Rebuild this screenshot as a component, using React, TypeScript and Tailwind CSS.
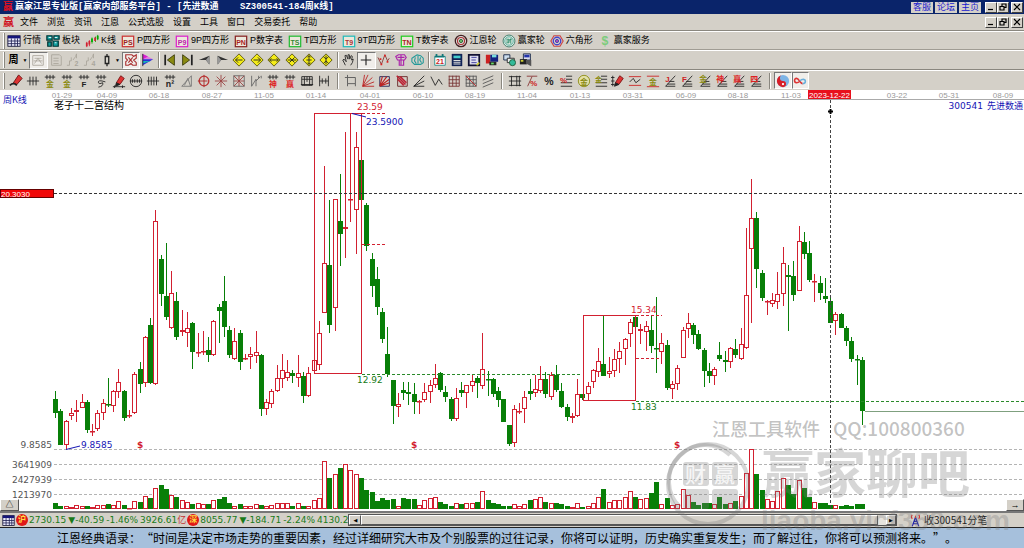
import type { ReactNode } from "react";

// [high, bodyTop, bodyBottom, low, up ? 1 : 0, volume height]
const candles: number[][] = [
  [391, 399, 413, 418, 0, 6], [409, 411, 445, 445, 0, 3], [420, 421, 445, 449, 1, 3], [408, 413, 416, 420, 1, 2],
  [400, 410, 412, 422, 1, 4], [394, 402, 408, 408, 1, 3], [400, 402, 430, 433, 0, 3], [424, 431, 431, 436, 1, 2],
  [410, 413, 429, 431, 1, 4], [399, 403, 413, 420, 1, 4], [378, 404, 405, 407, 0, 5], [390, 391, 406, 412, 1, 4],
  [369, 382, 392, 398, 1, 8], [390, 391, 418, 421, 0, 4], [410, 415, 416, 418, 1, 1], [372, 374, 413, 414, 1, 8],
  [362, 369, 384, 393, 0, 7], [336, 337, 383, 387, 1, 13], [318, 325, 383, 384, 0, 11], [210, 221, 384, 385, 1, 21],
  [255, 259, 294, 306, 0, 24], [243, 296, 317, 320, 0, 20], [271, 293, 328, 329, 1, 14], [292, 301, 337, 340, 0, 12],
  [310, 330, 332, 336, 1, 9], [312, 328, 333, 347, 1, 7], [322, 323, 352, 369, 0, 5], [333, 352, 353, 357, 1, 6],
  [331, 351, 352, 355, 1, 5], [337, 350, 355, 362, 0, 5], [320, 321, 355, 356, 1, 9], [304, 307, 311, 343, 0, 10],
  [276, 301, 327, 337, 0, 12], [326, 330, 355, 358, 0, 6], [328, 341, 359, 360, 1, 3], [330, 333, 362, 370, 0, 5],
  [354, 358, 359, 360, 1, 3], [347, 354, 357, 369, 1, 3], [331, 352, 356, 363, 1, 5], [354, 355, 409, 416, 0, 4],
  [399, 402, 409, 415, 1, 3], [389, 391, 404, 408, 1, 4], [365, 378, 391, 392, 1, 6], [354, 370, 379, 388, 1, 6],
  [360, 372, 378, 381, 1, 6], [370, 373, 376, 383, 0, 3], [355, 373, 378, 387, 1, 6], [372, 376, 396, 403, 0, 3],
  [367, 373, 396, 397, 1, 3], [358, 360, 371, 373, 1, 9], [321, 333, 365, 370, 1, 11], [166, 263, 313, 313, 1, 48],
  [200, 265, 325, 333, 0, 31], [199, 199, 308, 331, 1, 35], [174, 221, 234, 266, 0, 41], [132, 227, 229, 258, 1, 45],
  [113, 199, 200, 222, 1, 39], [132, 147, 210, 254, 1, 35], [115, 160, 200, 250, 0, 31], [203, 205, 246, 251, 0, 19],
  [253, 259, 286, 297, 0, 17], [267, 279, 307, 315, 0, 8], [308, 312, 339, 343, 0, 11], [327, 354, 374, 377, 0, 9],
  [380, 380, 406, 424, 0, 10], [393, 404, 407, 417, 1, 3], [382, 390, 393, 400, 0, 11], [382, 392, 394, 405, 0, 10],
  [383, 394, 402, 414, 0, 10], [400, 401, 402, 414, 1, 4], [383, 392, 400, 402, 1, 9], [380, 385, 392, 403, 1, 11],
  [364, 378, 385, 388, 1, 12], [372, 373, 390, 392, 0, 7], [386, 392, 397, 402, 0, 5], [397, 399, 419, 421, 0, 3],
  [388, 398, 419, 421, 1, 6], [382, 390, 393, 397, 0, 5], [385, 385, 393, 408, 1, 6], [375, 381, 386, 392, 1, 6],
  [376, 378, 383, 398, 0, 7], [333, 369, 386, 389, 1, 18], [371, 379, 380, 396, 0, 9], [378, 379, 394, 397, 0, 6],
  [387, 391, 400, 407, 0, 5], [399, 399, 422, 422, 0, 3], [425, 425, 444, 446, 0, 3], [405, 409, 443, 447, 1, 5],
  [403, 411, 412, 414, 1, 3], [391, 397, 409, 423, 1, 5], [379, 391, 394, 400, 0, 9], [375, 389, 393, 397, 1, 10],
  [366, 379, 391, 393, 1, 12], [372, 379, 394, 398, 0, 7], [372, 375, 397, 400, 1, 6], [365, 375, 390, 392, 0, 6],
  [383, 391, 407, 408, 0, 5], [404, 407, 417, 421, 0, 3], [413, 416, 418, 423, 1, 2], [379, 394, 416, 417, 1, 6],
  [394, 394, 398, 400, 0, 2], [382, 386, 394, 400, 1, 3], [369, 370, 382, 388, 1, 6], [348, 361, 372, 377, 1, 12],
  [316, 364, 376, 376, 0, 20], [357, 371, 374, 378, 1, 7], [349, 359, 371, 377, 1, 9], [342, 351, 359, 373, 1, 9],
  [338, 339, 349, 365, 1, 12], [319, 322, 334, 347, 1, 18], [315, 317, 327, 340, 0, 12], [324, 329, 331, 344, 1, 10],
  [321, 326, 332, 351, 1, 11], [315, 330, 346, 353, 0, 16], [297, 348, 349, 373, 0, 27], [333, 343, 352, 364, 1, 5],
  [340, 345, 388, 390, 0, 11], [381, 384, 389, 399, 1, 4], [365, 368, 384, 390, 1, 5], [327, 330, 358, 358, 1, 20],
  [313, 323, 329, 338, 1, 14], [323, 325, 335, 344, 0, 7], [330, 334, 349, 350, 0, 4], [348, 350, 371, 387, 0, 6],
  [363, 371, 376, 383, 0, 6], [367, 369, 376, 385, 1, 5], [342, 355, 359, 361, 0, 12], [351, 360, 362, 372, 0, 5],
  [347, 348, 362, 368, 1, 6], [339, 349, 355, 358, 0, 8], [328, 344, 359, 360, 1, 13], [228, 295, 348, 349, 1, 36],
  [179, 218, 249, 323, 1, 60], [212, 218, 269, 288, 0, 35], [270, 273, 298, 301, 0, 19], [300, 301, 302, 315, 1, 10],
  [293, 300, 304, 307, 1, 8], [272, 294, 302, 309, 1, 18], [247, 263, 294, 306, 1, 31], [265, 275, 277, 331, 0, 24],
  [261, 276, 295, 301, 0, 15], [226, 241, 291, 291, 1, 29], [232, 242, 254, 259, 0, 21], [241, 253, 280, 282, 0, 12],
  [274, 281, 282, 302, 1, 7], [276, 283, 293, 300, 0, 6], [278, 296, 299, 303, 0, 6], [295, 301, 323, 323, 0, 4],
  [312, 314, 321, 335, 1, 4], [313, 314, 328, 328, 0, 3], [326, 328, 341, 346, 0, 4], [337, 341, 359, 362, 0, 3],
  [355, 359, 360, 385, 0, 5], [357, 360, 411, 425, 0, 5],
];

const dates: [string, number][] = [
  ["01-29", 62], ["04-09", 107], ["06-18", 159], ["08-27", 212], ["11-05", 264], ["01-14", 316], ["04-01", 370],
  ["06-10", 423], ["08-19", 475], ["11-04", 527], ["01-13", 580], ["03-31", 633], ["06-09", 686], ["08-18", 738],
  ["11-03", 791], ["03-22", 897], ["05-31", 949], ["08-09", 1003],
];

const RED = "#d22030";
const GREEN = "#087f08";
const K = "#222";
const OLIVE = "#8a8a10";

const P = ({ d, c = K, w = 1, fill = "none" }: { d: string; c?: string; w?: number; fill?: string }) => (
  <path d={d} stroke={c} strokeWidth={w} fill={fill} />
);
const T = ({ s, c = K, x = 8, y = 13, size = 9 }: { s: string; c?: string; x?: number; y?: number; size?: number }) => (
  <text x={x} y={y} fill={c} fontSize={size} fontWeight="bold" textAnchor="middle">{s}</text>
);

const Icon = ({ children, className = "size-4" }: { children: ReactNode; className?: string }) => (
  <svg viewBox="0 0 16 16" className={className + " shrink-0 font-['Liberation_Sans','Noto_Sans_CJK_SC',sans-serif]"} aria-hidden="true">
    {children}
  </svg>
);

// small building blocks shared by the drawing tool icons
const comb = <P d="M2 3.5H14M4.5 1V6M8 1V6M11.5 1V6" />;
const fan = <P d="M3 14L14 2M3 14H14M5 11.5H14M7 8.5H13" />;
const levels = <P d="M8 2.5H15M8 6H15M2 10H15M2 14H15" />;
const grid = (c: string) => <P d="M2 2.5H14M2 6.5H14M2 10.5H14M2 14H14M2.5 2V14M6.5 2V14M10.5 2V14M14 2V14" c={c} />;
const pen = <><P d="M5 10L10 2L14 5L9 12Z" fill="#d33" c="#711" /><P d="M5 10L4 14L9 12Z" fill="#222" /></>;
const diamond = <P d="M8 1L15 8L8 15L1 8Z" fill="#f4ec18" c="#55500a" />;

const boxIcon = (s: string, c: string, t: string) => (
  <><rect x="1.5" y="2.5" width="13" height="12" fill="#ece8dc" stroke={c} strokeWidth="1.4" /><T s={s} c={t} y={12} size={8} /></>
);

type Tool = { name: string; art: ReactNode; on?: boolean };

const links: Tool[] = [
  { name: "行情", art: <><rect x="1" y="2" width="14" height="12" fill="#eef" stroke="#113" /><path d="M1 2H15V5H1Z" fill="#15157a" /><P d="M1 8H15M1 11H15M5 5V14M9 5V14M12 5V14" c="#225" /></> },
  { name: "板块", art: <><P d="M1 2H7V7H1ZM9 2H15V6H9ZM2 9H6V14H2ZM8 8H14V14H8Z" c="#033" fill="#12a0a0" w={1.4} /><P d="M3 4H6M10 10H12M10 4H13" c="#fff" /></> },
  { name: "K线", art: <><P d="M2 9V15M5 7V14" c={RED} /><P d="M8 4V11M12 3V9M14.500 1V7" c="#0a0" /><path d="M1 10H3V14H1ZM4 8H6V12H4Z" fill={RED} /><path d="M7 5H9V9H7ZM13.500 2H15.500V6H13.500Z" fill="#0a0" /><path d="M10.500 4H12.500V8H10.500Z" fill={RED} /></> },
  { name: "P四方形", art: boxIcon("PS", "#c33", "#922") },
  { name: "9P四方形", art: boxIcon("P9", "#d2c", "#b2a") },
  { name: "P数字表", art: boxIcon("PN", "#822", "#a22") },
  { name: "T四方形", art: boxIcon("TS", "#2b3", "#383") },
  { name: "9T四方形", art: boxIcon("T9", "#2bb", "#a33") },
  { name: "T数字表", art: boxIcon("TN", "#2c2", "#a22") },
  { name: "江恩轮", art: <><circle cx="8" cy="8" r="6.500" fill="#ddd" stroke="#422" strokeWidth="1.500" /><circle cx="8" cy="8" r="4" fill="none" stroke="#a33" strokeWidth="1.300" /><circle cx="8" cy="8" r="1.800" fill="#7c7" stroke="#252" /></> },
  { name: "赢家轮", art: <><circle cx="8" cy="8" r="6.800" fill="#dfe8df" stroke="#376" /><circle cx="8" cy="8" r="4.800" fill="none" stroke="#4a9" /><P d="M5 6H8V10H5M10 5V11M8 7L11 6M5 8H8" c="#286" /></> },
  { name: "六角形", art: <><P d="M4.500 2H11.500L15 8L11.500 14H4.500L1 8Z" c="#c44" w={1.300} /><circle cx="8" cy="8" r="4.300" fill="none" stroke="#44c" strokeWidth="1.500" /><circle cx="8" cy="8" r="1.800" fill="#b5b" stroke="#33a" /></> },
  { name: "赢家服务", art: <T s="$" c="#7ccc7c" y={13} size={14} /> },
];

const periodTools: Tool[] = [
  { name: "自选", on: true, art: <><P d="M2 3H14V14H2ZM4 6H12M4 12L8 6L12 12" c="#aaa69c" /><P d="M3 9H13" c="#aaa69c" /></> },
  { name: "文档", art: <P d="M3 2H12L14 4V14H3ZM5 6H11M5 9H11M5 12H11" c="#aaa69c" /> },
  { name: "K线2", art: <><P d="M1 14H4V9H6V5M8 8L11 4L12 1V6" c="#aaa69c" /><T s="2" c="#aaa69c" x={12} y={15} size={8} /></> },
  { name: "K线4", art: <><P d="M1 14H4V9H6V5M8 8L11 4L12 1V6" c="#aaa69c" /><T s="4" c="#aaa69c" x={12} y={15} size={8} /></> },
];

const markTools: Tool[] = [
  { name: "标记", on: true, art: <P d="M2 2H9L11 4L14 2V6L11 8L14 11V14H10L8 12L5 14H2V10L4 8L2 6ZM5 5L10 11M10 5L5 11" c="#a33" w={1.300} /> },
  { name: "筹码", art: <><path d="M2 1L14 7H2Z" fill="#e27be0" /><path d="M2 7H14L2 14Z" fill="#2a2ad8" /><path d="M2 1L8 4L2 7Z" fill="#d81ed0" /><path d="M2 9H11L2 12Z" fill="#16b8b8" /><P d="M2 1V15" /></> },
];

const navTools: Tool[] = [
  { name: "首页", art: <><P d="M2.500 2V14" w={2} /><P d="M13 2V14L5 8Z" fill={OLIVE} c="#383808" /></> },
  { name: "末页", art: <><P d="M13.500 2V14" w={2} /><P d="M3 2V14L11 8Z" fill={OLIVE} c="#383808" /></> },
  { name: "左移", art: <><path d="M1 8L13 3V13L9 8Z" fill="#333" /><path d="M9 8L13 13V3Z" fill="#999" /></> },
  { name: "右移", art: <><path d="M15 8L3 3V13L7 8Z" fill="#333" /><path d="M7 8L3 13V3Z" fill="#999" /></> },
  { name: "左", art: <>{diamond}<P d="M12 8H4M7 5L4 8L7 11" /></> },
  { name: "右", art: <>{diamond}<P d="M4 8H12M9 5L12 8L9 11" /></> },
  { name: "展宽", art: <>{diamond}<P d="M3 8H13M5 6L3 8L5 10M11 6L13 8L11 10" /></> },
  { name: "收窄", art: <>{diamond}<P d="M3 8H13M5 5L8 8L5 11M11 5L8 8L11 11" /></> },
  { name: "拉高", art: <>{diamond}<P d="M8 3V13M6 5L8 3L10 5M6 11L8 13L10 11M5 8H11" /></> },
  { name: "压低", art: <>{diamond}<P d="M8 3V13M5 4L8 7L11 4M5 12L8 9L11 12" /></> },
];

const cursorTools: Tool[] = [
  { name: "手形", art: <P d="M5 14L2 8L3.500 7L6 10L4.500 3L6 2.500L8 7V2H9.500L10 7L11.500 3L13 4L12 8L14 7L13 11L11 14" /> },
  { name: "十字", on: true, art: <P d="M8 2V14M2 8H14" w={1.300} /> },
  { name: "波浪", art: <><P d="M1 5L5 13L9 2L12 9L14 6" c="#833" /><path d="M3 6H5V8H3ZM4 12H6V14H4ZM8 2H10V4H8ZM11 9H13V11H11Z" fill="#d22" /></> },
  { name: "画板", art: <P d="M2 4L5 2H12L14 5L12 8H4ZM6 8V14H11V8M4 5H12M8 2V14" c="#a2a" w={1.300} /> },
  { name: "云图", art: <P d="M4 4L7 2L11 3L14 6V11L11 13H4L1 10V6ZM5 5L4 9L6 12M8 3V12M11 5L10 8L12 11" c="#299" w={1.200} /> },
];

const fileTools: Tool[] = [
  { name: "日历", art: <><P d="M2 4H14V14H2Z" fill="#fff" c="#288" /><P d="M2 4H13M4 1V5M11 1V5" c="#177" w={2} /><T s="21" c="#c22" y={13} size={8} /></> },
  { name: "计算器", art: <><path d="M2 1H14V15H2Z" fill="#125" /><path d="M4 3H12V6H4Z" fill="#4cc" /><P d="M4 8.500H12M4 10.500H12M4 12.500H12" c="#ddd" w={1.200} /></> },
  { name: "报表", art: <><P d="M2 2H14V14H2Z" fill="#dde" c="#113" w={2} /><P d="M5 5H11M5 8H10M5 11H11" c="#339" /><P d="M11 14L14 11" c="#cc3" w={2} /></> },
  { name: "保存", art: <><path d="M1 2H6V12H1Z" fill="#c22" /><path d="M6 2H15V10H6Z" fill="#122080" /><path d="M8 2H13V5H8Z" fill="#7dd" /><path d="M5 10H13V14H5Z" fill="#282828" /><path d="M7 11H10V13H7Z" fill="#6d6" /></> },
  { name: "网络", art: <><P d="M2 2H9V8H2Z" fill="#cde" c="#124" /><P d="M6 6H14V11H6Z" fill="#eee" c="#222" /><circle cx="12" cy="11" r="3.500" fill="#3b9" stroke="#253" /></> },
  { name: "打印", art: <><P d="M5 1H13V8H5Z" fill="#dde" c="#124" /><path d="M6 2H12V5H6Z" fill="#23a" /><path d="M1 7H9V13H1Z" fill="#222" /><path d="M8 8H14V15L8 12Z" fill="#555" /><path d="M2 8H5V10H2Z" fill="#cc3" /></> },
];

const drawTools: Tool[] = [
  { name: "画笔", art: <><P d="M5 10L11 1L15 5L9 12Z" fill="#d33" c="#611" /><P d="M1 13Q5 9 9 13" c="#222" w={2} /></> },
  { name: "竖线", art: <P d="M1 8H15M4.500 3V13M8 3V13M11.500 3V13" /> },
  { name: "金时间", art: <>{comb}<T s="金" c={OLIVE} y={15} /></> },
  { name: "金周期", art: <>{comb}<T s="金" c={OLIVE} y={15} /></> },
  { name: "F时间", art: <>{comb}<T s="F" y={15} /></> },
  { name: "螺旋", art: <>{comb}<P d="M13 9Q4 6 5 10Q6 12 10 10Q11 14 5 15" /></> },
  { name: "画线", art: <>{pen}<P d="M1 14.500H15M3 13V16M12 13V16" /></> },
  { name: "圆周", art: <><circle cx="8" cy="8" r="6.500" fill="none" stroke="#222" /><P d="M1 8H15M4 6V10M6.500 6V10M9.500 6V10M12 6V10" /></> },
  { name: "等距", art: <P d="M1 8H15M3 3V13M6 3V13M9 3V13M12 3V13" /> },
  { name: "平方", art: <>{comb}<T s="n²" y={15} size={10} /></> },
  { name: "三角", art: <P d="M2 14L13 2V14ZM5 13L9 5L12 14" c="#777" /> },
  { name: "转轮", art: <><circle cx="8" cy="8" r="5.500" fill="none" stroke="#b33" strokeWidth="1.500" /><P d="M8 1V15M1 8H12" c="#a22" /></> },
  { name: "射线", art: <P d="M8 1V15M1 8H15M3 3L13 13M13 3L3 13" c="#944" /> },
  { name: "方阵", art: <><P d="M2 2H14V14H2Z" c="#666" /><P d="M2 2L14 14M14 2L2 14M8 2V14M2 8H14" c="#944" /></> },
  { name: "折线", art: <P d="M3 2V14L8 6V14M8 8L13 3M11 2V5M14 2V5" c="#666" /> },
  { name: "神线", art: <>{comb}<T s="神" c="#d22" y={15} /></> },
  { name: "赢线", art: <>{comb}<T s="赢" c="#d22" y={15} /></> },
  { name: "网线", art: <P d="M2 3H14V13H2ZM2 6H14M5 3V13M8 3V9M11 3V13M1 12H15" /> },
  { name: "分割", art: <P d="M3 2V14M13 2V14M3 8H13M6 5V11M10 5V11" /> },
];

const angleTools: Tool[] = [
  { name: "矩形", art: <P d="M4 4H13V11H4ZM1 4H4V1M4 11V14M13 11V14" c="#555" /> },
  { name: "扇形", art: <P d="M2 14L4 1M2 14L8 1M2 14L13 4M2 14L15 9M2 14H15" c="#b22" /> },
  { name: "方扇", art: <><P d="M2 3H13V14H2Z" c="#225" /><P d="M2 14L5 3M2 14L10 3M2 14L13 6M2 14L13 10" c="#b22" w={1.300} /></> },
  { name: "方格", art: <><P d="M3 3H14V14H3Z" c="#622" /><P d="M2 2L12 12M6 3L13 10M3 6L10 13" c="#b23" w={1.800} /></> },
  { name: "角度", art: <P d="M2 14L14 2M2 14L14 8M2 14H14" /> },
  { name: "波段", art: <P d="M1 3L6 13L10 6L14 12" /> },
  { name: "红格", art: <>{grid("#733")}</> },
  { name: "分格", art: <>{grid("#555")}<P d="M2 2L14 14" c="#b22" /></> },
  { name: "平行", art: <P d="M2 7L14 2M2 11L14 6M2 15L14 10" c="#555" /> },
];

const levelTools: Tool[] = [
  { name: "刻度", art: <P d="M1 3H15M1 8H15M1 13H15M4 2V14M10 2V14M13 2V14" /> },
  { name: "百分比", art: <><P d="M2 2.500H14M3 14L8 3" c="#833" /><T s="%" c="#c22" x={10} y={14} /></> },
  { name: "比例", art: <T s="%" size={12} /> },
  { name: "百分线", art: <>{levels}<T s="%" c="#c22" x={5} y={10} /></> },
  { name: "金圆", art: <><circle cx="8" cy="8" r="6.500" fill="#e3e0a8" stroke={OLIVE} /><T s="金" c={OLIVE} y={12} size={9} /></> },
  { name: "金线", art: <>{levels}<T s="金" c={OLIVE} x={5} y={9} size={8} /></> },
  { name: "标尺", art: <>{pen}<P d="M2 2V14M0 4H4M0 8H4M0 12H4" /></> },
  { name: "波线", art: <><P d="M1 3H15M1 13H15" c="#c22" /><P d="M2 9L6 5L9 10L14 6" /></> },
  { name: "金区", art: <><P d="M1 2.500H15M1 14.500H15" c="#c22" /><T s="金" c={OLIVE} y={12} /></> },
  { name: "J角", art: <>{fan}<T s="J" c="#c22" x={5} y={9} /></> },
  { name: "F角", art: <>{fan}<T s="F" c="#c22" x={5} y={9} /></> },
  { name: "金角", art: <>{fan}<T s="金" c={OLIVE} x={6} y={9} /></> },
  { name: "神角", art: <>{fan}<T s="神" c="#d22" x={6} y={9} /></> },
  { name: "赢角", art: <>{fan}<T s="赢" c="#d22" x={6} y={9} /></> },
  { name: "四角", art: <>{fan}<T s="四" c="#d22" x={6} y={9} /></> },
];

const yinTools: Tool[] = [
  { name: "太极", on: true, art: <><circle cx="8" cy="8" r="7" fill="#7db4e6" /><path d="M8 1A7 7 0 0 0 8 15A3.500 3.500 0 0 0 8 8A3.500 3.500 0 0 1 8 1Z" fill="#d81e28" /><circle cx="8" cy="11.500" r="1.300" fill="#fff" /></> },
  { name: "循环", on: true, art: <><P d="M11 11C8 11 7 5 4 5C1 5 1 9.500 4 10C6 10 7 9 8 8" c="#d33" w={1.800} /><P d="M8 8C9 6.500 10 6 12 6C15 6.500 15 11 11 11" c="#6ab0dc" w={1.800} /></> },
];

const ToolGroup = ({ tools, className }: { tools: Tool[]; className: string }) => (
  <div className={"flex items-center " + className}>
    {tools.map((t) => (
      <button
        key={t.name}
        type="button"
        aria-label={t.name}
        className={
          "flex h-[17px] flex-1 items-center justify-center " +
          (t.on ? "border border-t-[#777] border-l-[#777] border-r-white border-b-white bg-[#f0eeea]" : "")
        }
      >
        <Icon className="size-[14px]">{t.art}</Icon>
      </button>
    ))}
  </div>
);

const Sep = ({ className = "mx-1" }: { className?: string }) => (
  <div className={"h-4 w-px shrink-0 bg-[#8a877f] shadow-[1px_0_0_#fff] " + className} />
);
const Grip = () => <div className="mx-[3px] h-4 w-px shrink-0 bg-white shadow-[1px_0_0_#8a877f]" />;

const WinButton = ({ label, d }: { label: string; d: string }) => (
  <button type="button" aria-label={label} className="flex h-[11px] w-3 items-center justify-center border border-t-white border-l-white border-r-[#404040] border-b-[#404040] bg-[#d4d0c8]">
    <svg viewBox="0 0 8 8" className="size-2"><path d={d} fill="none" stroke="#000" strokeWidth="1.2" /></svg>
  </button>
);

const WinButtons = () => (
  <div className="flex pr-px">
    <WinButton label="最小化" d="M1 6.500H6" />
    <WinButton label="还原" d="M3 3V1H7V4.500H5M1 3.500H5V7H1Z" />
    <div className="w-[2px]" />
    <WinButton label="关闭" d="M1 1L7 7M7 1L1 7" />
  </div>
);

const Dash = ({ x1, x2, y, c, d = "3 2" }: { x1: number; x2: number; y: number; c: string; d?: string }) => (
  <line x1={x1} x2={x2} y1={y + 0.5} y2={y + 0.5} stroke={c} strokeDasharray={d} />
);

const Chart = () => (
  <svg
    viewBox="0 90 1024 421"
    className="pointer-events-none relative z-10 block h-auto w-full overflow-visible font-['DejaVu_Sans','Noto_Sans_CJK_SC',sans-serif]"
    role="img"
    aria-label="先进数通 周K线"
  >
    <g className="font-['Liberation_Sans',sans-serif]" fontSize="8" fill="#999" textAnchor="middle">
      {dates.map(([d, x]) => (
        <text key={d} x={x} y="98">{d}</text>
      ))}
      <rect x="808" y="90" width="43" height="9" fill="#e8101c" />
      <text x="829.5" y="98" fill="#fff">2023-12-22</text>
    </g>
    <line x1="54" x2="1024" y1="99.5" y2="99.5" stroke="#aaa" />

    <g className="font-['Noto_Sans_CJK_SC',sans-serif]">
      <text x="3" y="103" fontSize="9" fill="#1414b4">周K线</text>
      <text x="54" y="109" fontSize="10" fill="#000">老子十二宫结构</text>
      <text x="1023" y="109" fontSize="9" fill="#1414b4" textAnchor="end" xmlSpace="preserve">
        <tspan className="font-['DejaVu_Sans',sans-serif]">300541</tspan>  先进数通
      </text>
    </g>

    {[449, 464, 479, 494].map((y) => (
      <Dash key={y} x1={54} x2={1024} y={y} c="#b4b4b4" />
    ))}
    <g fontSize="9" fill="#555" textAnchor="end">
      <text x="52" y="448">9.8585</text>
      <text x="52" y="468">3641909</text>
      <text x="52" y="483">2427939</text>
      <text x="52" y="498">1213970</text>
    </g>

    {candles.map(([high, top, bottom, low, up, vol], i) => {
      const x = Math.round(55.2 + i * 5.272);
      const color = up ? RED : GREEN;
      return (
        <g key={i} stroke={color} fill={up ? "#fff" : color}>
          <line x1={x + 0.5} x2={x + 0.5} y1={high} y2={low} />
          <rect x={x - 1.5} y={top + 0.5} width="4" height={Math.max(bottom - top - 1, 0.5)} />
          <rect x={x - 1.5} y={509.5 - vol} width="4" height={Math.max(vol - 1, 0.5)} />
        </g>
      );
    })}

    <g fill="none" stroke={RED} strokeWidth="1">
      <rect x="314.5" y="113.500" width="47" height="260" />
      <rect x="583.5" y="315.500" width="52" height="85" />
    </g>
    <Dash x1={362} x2={387} y={113} c={RED} />
    <Dash x1={362} x2={387} y={244} c={RED} />
    <Dash x1={636} x2={662} y={315} c={RED} />
    <Dash x1={636} x2={662} y={358} c={RED} />
    <Dash x1={362} x2={582} y={374} c="#2a8a2a" />
    <Dash x1={636} x2={1024} y={401} c="#2a8a2a" />
    <line x1="865" x2="1024" y1="411.5" y2="411.5" stroke="#7fa07f" />

    <g fontSize="9">
      <text x="357" y="110" fill={RED}>23.59</text>
      <text x="366" y="125" fill="#1414b4">23.5900</text>
      <text x="357" y="383" fill="#167a16">12.92</text>
      <text x="631" y="313" fill={RED}>15.34</text>
      <text x="631" y="410" fill="#167a16">11.83</text>
      <text x="81" y="448" fill="#1414b4">9.8585</text>
      <g fill={RED} fontWeight="bold">
        <text x="137" y="448">$</text>
        <text x="411" y="448">$</text>
        <text x="674" y="448">$</text>
      </g>
    </g>
    <path d="M352 113.500L366 117M66 449.500L80 446" fill="none" stroke="#1414b4" />

    <Dash x1={54} x2={1024} y={193} c="#333" />
    <line x1="830.5" x2="830.5" y1="100" y2="510" stroke="#444" strokeDasharray="3 2" />
    <path d="M828 111.500H833M830.500 109V114" stroke="#000" strokeWidth="2" />
    <rect x="0.500" y="189.500" width="53" height="8" fill="#f00808" stroke="#600" />
    <text x="1" y="197" fontSize="8" fill="#fff" className="font-['Liberation_Sans',sans-serif]">20.3030</text>

    {/* watermark */}
    <g fill="#777" className="font-['Noto_Sans_CJK_SC',sans-serif]">
      <g fillOpacity="0.45" fontWeight="500">
        <text x="712" y="436" fontSize="18">江恩工具软件</text>
        <text x="833" y="436" fontSize="19">QQ:100800360</text>
      </g>
      <g fillOpacity="0.3">
        <text x="762" y="493" fontSize="52" fontWeight="bold">赢家聊吧</text>
        <text x="761" y="530" fontSize="28" fontWeight="bold" className="font-['Liberation_Sans',sans-serif]">liaoba.yicf360.com</text>
      </g>
      <g fill="none" stroke="#777" strokeOpacity="0.3">
        <circle cx="708" cy="484" r="40" strokeWidth="4" />
        <path d="M680 507A36 36 0 0 1 730 455" strokeWidth="4" />
      </g>
      <g fillOpacity="0.3">
        <rect x="683" y="462" width="26" height="24" rx="3" />
        <rect x="712" y="462" width="26" height="24" rx="3" />
        <rect x="683" y="489" width="26" height="20" rx="3" />
        <rect x="712" y="489" width="26" height="20" rx="3" />
      </g>
      <g fill="#fff" fillOpacity="0.8" fontSize="21" fontWeight="500">
        <text x="685" y="482">财</text>
        <text x="714" y="482">赢</text>
      </g>
    </g>
  </svg>
);

const menus = ["文件", "浏览", "资讯", "江恩", "公式选股", "设置", "工具", "窗口", "交易委托", "帮助"];

const raised = "border border-t-white border-l-white border-r-[#555] border-b-[#555] bg-[#d4d0c8]";

export default function App() {
  return (
    <div className="w-full overflow-hidden bg-white font-['Liberation_Sans','Noto_Sans_CJK_SC',sans-serif] text-[9px] leading-none text-black">
      <header className="flex h-[14px] items-center bg-[#0a246a] pl-[3px] text-white">
        <span className="w-3 text-[10px] font-bold text-[#e01020]">赢</span>
        <h1 className="flex-1 text-[9px] font-bold whitespace-pre font-['Liberation_Mono','Noto_Sans_CJK_SC',monospace]">
          赢家江恩专业版[赢家内部服务平台] - [先进数通    SZ300541-184周K线]
        </h1>
        <nav className="mr-1 flex gap-[2px]">
          {["客服", "论坛", "主页"].map((t) => (
            <a key={t} href="#" className="flex h-[11px] w-[22px] items-center justify-center bg-[#d4d0c8] text-[9px] text-[#1a1ad0]">{t}</a>
          ))}
        </nav>
        <WinButtons />
      </header>

      <div className="flex h-[17px] items-center border-b border-[#8a877f] bg-[#d4d0c8] pl-[3px]">
        <span className="w-[17px] text-[11px] font-bold text-[#d01020]">赢</span>
        <nav className="flex flex-1 gap-[9px]">
          {menus.map((m) => (
            <button key={m} type="button">{m}</button>
          ))}
        </nav>
        <WinButtons />
      </div>

      <div className="flex h-[19px] items-center border-t border-b border-t-white border-b-[#a09c94] bg-[#d4d0c8]">
        <Grip />
        <div className="flex items-center gap-[5px]">
          {links.map((l) => (
            <button key={l.name} type="button" className="flex items-center gap-[2px] whitespace-nowrap">
              <Icon className="size-[14px]">{l.art}</Icon>
              {l.name}
            </button>
          ))}
        </div>
      </div>

      <div className="flex h-5 items-center border-t border-b border-t-white border-b-[#8a877f] bg-[#d4d0c8]">
        <Grip />
        <button type="button" className="flex w-[22px] items-center justify-center gap-1 text-[10px] font-bold">
          周<span className="text-[5px]">▼</span>
        </button>
        <ToolGroup tools={periodTools} className="w-[69px]" />
        <button type="button" aria-label="K线样式" className="flex w-6 items-center justify-center gap-px">
          <Icon className="size-[14px]"><P d="M8 1V4M8 12V15M6 4H10V12H6Z" w={1.500} /></Icon>
          <span className="text-[5px]">▼</span>
        </button>
        <ToolGroup tools={markTools} className="w-[34px]" />
        <Sep className="mx-[2px]" />
        <ToolGroup tools={navTools} className="w-[174px]" />
        <Sep className="mx-[2px]" />
        <ToolGroup tools={cursorTools} className="w-[86px]" />
        <Sep className="mx-[2px]" />
        <ToolGroup tools={fileTools} className="w-[104px]" />
      </div>

      <div className="flex h-5 items-center border-t border-t-white bg-[#d4d0c8]">
        <Grip />
        <ToolGroup tools={drawTools} className="w-[326px]" />
        <Sep />
        <ToolGroup tools={angleTools} className="w-[155px]" />
        <Sep />
        <ToolGroup tools={levelTools} className="w-[259px]" />
        <Sep />
        <ToolGroup tools={yinTools} className="w-[35px]" />
      </div>

      <main className="relative border-b-2 border-[#777]">
        <Chart />
        <button type="button" aria-label="展开" className={"absolute bottom-0 left-0 h-3 w-[19px] text-[8px] leading-none " + raised}>△</button>
        <button type="button" aria-label="向右" className={"absolute right-0 bottom-0 h-3 w-[18px] text-[9px] leading-none " + raised}>→</button>
      </main>

      <footer>
        <div className="flex h-[15px] items-center border-b border-[#222] bg-[#d4d0c8] text-[#1a7a1a] font-['DejaVu_Sans','Noto_Sans_CJK_SC',sans-serif]">
          <div className="flex shrink-0 items-center whitespace-nowrap">
            <Icon className="mr-px ml-[2px] size-[13px]">{links[0].art}</Icon>
            <span className="mr-px flex size-3 shrink-0 items-center justify-center rounded-full bg-[#e01818] text-[8px] font-bold text-[#fd4]">沪</span>
            <span className="mr-[2px]">2730.15</span>
            <span className="mr-[2px]">▼-40.59</span>
            <span className="mr-[2px]">-1.46%</span>
            <span>3926.61<b className="font-normal text-[#c03030]">亿</b></span>
            <span className="mx-px flex size-3 shrink-0 items-center justify-center rounded-full bg-[#e01818] text-[8px] font-bold text-[#fd4]">深</span>
            <span className="mr-[2px]">8055.77</span>
            <span className="mr-[2px]">▼-184.71</span>
            <span className="mr-[2px]">-2.24%</span>
            <span>4130.2</span>
          </div>
          <div className="flex h-3 flex-1 border border-[#555] bg-[#e6e3dd]">
            <button type="button" aria-label="向左滚动" className={"w-3 text-[5px] text-black " + raised}>◀</button>
            <div className={"flex-1 " + raised} />
            <div className="w-2" />
            <button type="button" aria-label="向右滚动" className={"w-[10px] text-[5px] text-black " + raised}>▶</button>
          </div>
          <div className="ml-3 flex w-[115px] items-center gap-[2px] text-[10px] whitespace-nowrap text-[#222] font-['Noto_Sans_CJK_SC',sans-serif]">
            <Icon className="size-[13px]">
              <P d="M8 4L4 15M8 4L12 15M6 9H10M5 12H11" c="#22a" w={1.400} />
              <P d="M4 1Q2 3 4 6M12 1Q14 3 12 6M8 2V5" c="#d33" w={1.300} />
            </Icon>
            收300541分笔
          </div>
        </div>
        <p className="h-5 bg-[#a6c0dc] pl-[57px] text-[12px] leading-5 whitespace-nowrap [text-spacing-trim:space-all] font-['Noto_Sans_CJK_SC',sans-serif]" lang="zh-CN">
          江恩经典语录：“时间是决定市场走势的重要因素，经过详细研究大市及个别股票的过往记录，你将可以证明，历史确实重复发生；而了解过往，你将可以预测将来。”。
        </p>
      </footer>
    </div>
  );
}
